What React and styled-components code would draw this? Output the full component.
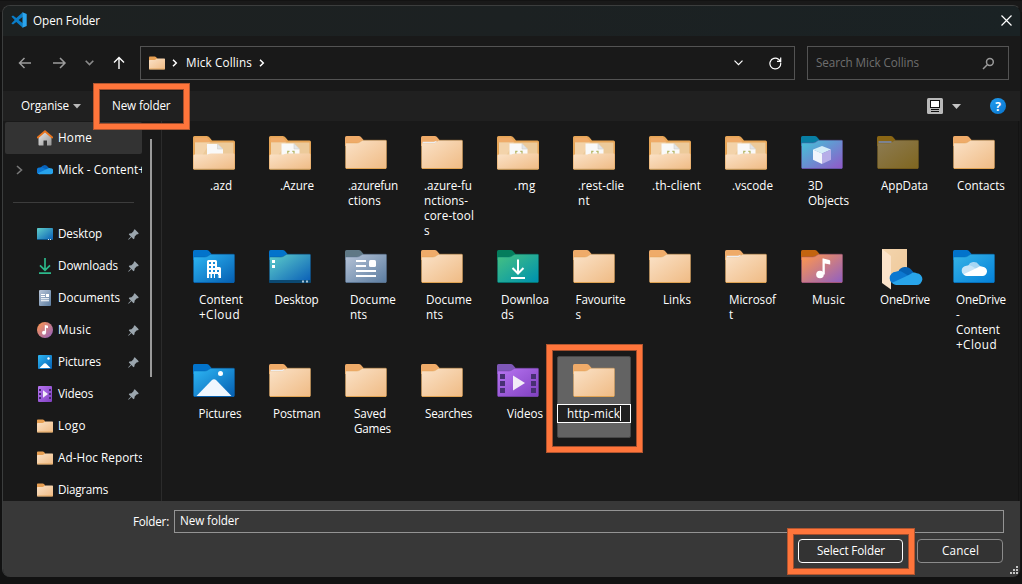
import React, { useLayoutEffect, useRef, useState } from "react";
import styled, { createGlobalStyle, css } from "styled-components";

const GlobalStyle = createGlobalStyle`
  * { box-sizing: border-box; }
  body {
    margin: 0;
    background: #121212;
    font-family: "Open Sans", "Noto Sans", sans-serif;
    font-size: 11.7px;
    line-height: 15px;
    color: #fff;
    overflow: hidden;
  }
  svg { display: block; flex: none; }
`;

/* ---------- text with a fixed advance width ---------- */

const Run = styled.span`
  display: block;
  width: max-content;
  margin-bottom: ${(p) => (p.$raised ? 2 : 0)}px;
  white-space: pre;
  color: ${(p) => p.$color || "#fff"};
`;

function Text({ children, w, color, raised }) {
  const ref = useRef(null);
  const [spacing, setSpacing] = useState(0);
  useLayoutEffect(() => {
    const natural = ref.current.getBoundingClientRect().width;
    if (w) setSpacing((w - natural) / children.length);
  }, []);
  return (
    <Run ref={ref} $color={color} $raised={raised} style={{ letterSpacing: `${spacing}px` }}>
      {children}
    </Run>
  );
}

/* ---------- window shell ---------- */

const Screen = styled.div`
  position: relative;
  width: 1022px;
  height: 584px;
  padding: 5px 1px 7px 2px;
  background: linear-gradient(#131313 0 1px, #191919 1px 12px, #121212 12px);
  overflow: hidden;
`;

const Dialog = styled.main`
  display: flex;
  flex-direction: column;
  width: 1019px;
  height: 572px;
  border: 1px solid #3b3d3d;
  border-right-color: #161616;
  border-bottom: 0;
  border-radius: 8px;
  background: #191919;
  overflow: hidden;
`;

const TitleBar = styled.header`
  display: flex;
  align-items: center;
  flex: none;
  height: 30px;
  padding: 0 8px 2px 8px;
  gap: 6px;
  background: linear-gradient(90deg, #1d2121, #1c2122 50%, #1a2224);
`;

const Spacer = styled.div`
  flex: 1;
`;

const NavBar = styled.nav`
  display: flex;
  flex: none;
  height: 55px;
  padding: 10px 10px 0 0;
`;

const NavButtons = styled.div`
  display: flex;
  align-items: center;
  width: 137px;
  height: 34px;
  padding-left: 15px;
`;

const Field = styled.div`
  display: flex;
  align-items: center;
  width: ${(p) => p.$width}px;
  height: 34px;
  margin-right: ${(p) => p.$after || 0}px;
  padding: 0 ${(p) => p.$padRight}px 0 8px;
  border: 1px solid #535353;
`;

const Gap = styled.i`
  flex: none;
  width: ${(p) => p.$w}px;
`;

const CommandBar = styled.div`
  display: flex;
  align-items: center;
  flex: none;
  height: 30px;
  padding: 0 14px 0 18px;
  background: #202020;
`;

const Content = styled.div`
  display: flex;
  flex: none;
  height: 380px;
  overflow: hidden;
`;

/* ---------- sidebar ---------- */

const Sidebar = styled.aside`
  display: flex;
  width: 159px;
  border-right: 1px solid #2b2b2b;
`;

const Tree = styled.div`
  width: 139px;
  padding: 1px 0 0 2px;
  overflow: hidden;
`;

const TreeRow = styled.div`
  display: flex;
  align-items: center;
  height: 32px;
  padding-right: 3px;
  overflow: hidden;
  ${(p) => p.$active && css`
    background: #333;
    border-radius: 2px;
  `}
`;

const Expander = styled.div`
  display: flex;
  justify-content: center;
  flex: none;
  width: 32px;
  padding-right: 3px;
`;

const TreeIcon = styled.div`
  flex: none;
  width: 21px;
`;

const TreeLabel = styled.div`
  flex: 1;
  white-space: nowrap;
`;

const Divider = styled.div`
  height: 32px;
  padding: 16px 8px 0 8px;
  &::after {
    content: "";
    display: block;
    height: 1px;
    background: #3c3c3c;
  }
`;

const ScrollTrack = styled.div`
  display: flex;
  justify-content: flex-end;
  width: 10px;
  padding-top: 18px;
`;

const ScrollThumb = styled.div`
  width: 2px;
  height: 238px;
  background: #9a9a9a;
`;

/* ---------- folder grid ---------- */

const FolderGrid = styled.section`
  display: grid;
  grid-template-columns: repeat(11, 76px);
  grid-auto-rows: 114px;
  width: 857px;
  padding: 7px 0 0 14px;
  border-right: 1px solid #131313;
`;

const Cell = styled.div`
  width: 74px;
  height: ${(p) => (p.$selected ? "82px" : "114px")};
  margin-left: 1px;
  padding-top: 8px;
  ${(p) => p.$selected && css`
    background: #636363;
    border: 1px solid #474747;
    padding-top: 7px;
    border-radius: 2px;
  `}
`;

const CellIcon = styled.div`
  display: flex;
  justify-content: center;
  height: 42px;
`;

const CellLabel = styled.div`
  padding-left: ${(p) => p.$left - 1}px;
`;

const NameEditor = styled.div`
  display: flex;
  align-items: center;
  height: 19px;
  margin: -2px -1px 0;
  padding-left: 9px;
  border: 1px solid #fff;
  background: #202020;
`;

const Caret = styled.i`
  width: 1px;
  height: 15px;
  background: #fff;
`;

/* ---------- footer ---------- */

const Footer = styled.footer`
  flex: 1;
  padding: 9px 16px 0 0;
  background: #383838;
`;

const FooterRow = styled.div`
  display: flex;
  align-items: center;
  height: 23px;
  padding-left: 130px;
`;

const FolderInput = styled.div`
  display: flex;
  width: 830px;
  height: 23px;
  padding: 2px 0 0 5px;
  border: 1px solid #949494;
`;

const InputLabel = styled.div`
  width: 41px;
`;

const Actions = styled.div`
  display: flex;
  justify-content: flex-end;
  gap: 14px;
  padding: 6px 1px 0 0;
`;

const Button = styled.div`
  display: flex;
  align-items: center;
  justify-content: center;
  width: ${(p) => p.$width}px;
  height: 24px;
  padding-left: 1px;
  border: 1px solid ${(p) => (p.$primary ? "#fff" : "#8b8b8b")};
  border-radius: 4px;
  background: #333;
`;

const Grip = styled.div`
  position: absolute;
  left: 1010px;
  top: 566px;
`;

const Highlight = styled.div`
  position: absolute;
  left: ${(p) => p.$x}px;
  top: ${(p) => p.$y}px;
  width: ${(p) => p.$w}px;
  height: ${(p) => p.$h}px;
  border: 6px solid #ff753b;
  outline: 1px solid #b2552f;
  outline-offset: -1px;
  box-shadow: inset 0 0 0 1px #a14d2c;
`;

const Hidden = styled.svg`
  position: absolute;
`;

/* ---------- drawings ---------- */

const gradients = {
  sand: ["#fae0c4", "#f0bd88"],
  blue: ["#2cb3f1", "#0763b5"],
  teal: ["#5bc9c9", "#0c62b8"],
  slate: ["#b3c1d5", "#6080a3"],
  green: ["#43bf83", "#0093ad"],
  music: ["#fd9650", "#9562bd"],
  cube: ["#45c1d8", "#8e5dc9"],
  olive: ["#8c7a50", "#806722"],
  drive: ["#34b2e6", "#0683da"],
  violet: ["#b573ef", "#8343c3"],
  house: ["#e4e4e4", "#9a9a9a"],
};

const tabColor = {
  sand: "#efab69", blue: "#0273cb", teal: "#0273cb", slate: "#5f7885", green: "#047d5c",
  music: "#c3640f", cube: "#087ea3", olive: "#8a6614", drive: "#0273cb", violet: "#7e57b7",
};

const edgeColor = {
  sand: "#dfa252", blue: "#075fab", teal: "#0a5794", slate: "#58718d", green: "#04736e",
  music: "#a2577a", cube: "#6654a4", olive: "#72581a", drive: "#0670bb", violet: "#7141a3",
};

function Gradients() {
  return (
    <Hidden width="0" height="0">
      <defs>
        {Object.entries(gradients).map(([id, [a, b]]) => (
          <linearGradient key={id} id={id} x1="0" y1="0" x2="1" y2="1">
            <stop offset="0.05" stopColor={a} />
            <stop offset="0.95" stopColor={b} />
          </linearGradient>
        ))}
      </defs>
    </Hidden>
  );
}

const Cloud = ({ dark, mid, light }) => (
  <>
    <path d="M8 6.5A7 6.5 0 0 1 20.5 5L23 8 14 14 3 12Z" fill={dark} />
    <path d="M5.7 6.6Q9 5 12.5 7.2L22 13 6 18.6A6 6 0 0 1 5.7 6.6Z" fill={mid} />
    <path d="M20 8.5Q22.5 6.5 25.5 8A5.5 5.5 0 0 1 25 19H6Q3.6 19 2.2 17L17 10Z" fill={light} />
  </>
);

const glyphs = {
  building: (
    <g fill="#fff">
      <path d="M14 28V11.500q0-1.500 1.500-1.500h7q1.500 0 1.500 1.500V17h2.500q1.500 0 1.500 1.500V28h-3v-4h-3v4Z" />
      <g fill="#168bd8">
        <path d="M16 12h2v2h-2zM20 12h2v2h-2zM16 16h2v2h-2zM20 16h2v2h-2zM16 20h2v2h-2zM20 20h2v2h-2zM24 20h2v2h-2zM16 24h1.500v4H16zM19 24h2v4h-2zM24 25h1.500v3H24z" />
      </g>
    </g>
  ),
  desktop: (
    <g>
      <path d="M0 30h42v2q0 1-1 1H1q-1 0-1-1z" fill="#0b4972" />
      <path d="M3 10h3v3H3zM3 15h3v3H3z" fill="#fff" />
      <path d="M33 30.500h2v2h-2zM37 30.500h2v2h-2z" fill="#a9c5d9" />
    </g>
  ),
  doc: (
    <g fill="#fff">
      <path d="M11 10h10v2H11zM11 15h10v2H11zM11 20h20v2H11zM11 25h20v2H11z" />
      <rect x="24" y="10" width="7" height="7" rx="1.500" />
    </g>
  ),
  download: (
    <g fill="none" stroke="#fff" strokeWidth="2">
      <path d="M21 9.500V23M15.500 18l5.500 5.500 5.500-5.500M14 28h14" />
    </g>
  ),
  music: (
    <g fill="#fff">
      <circle cx="19" cy="24.500" r="3.800" />
      <path d="M21.500 24.500V9q0-.8.800-.6l6 1.600q.9.300.9 1v3.500l-5.400-1v11Z" />
    </g>
  ),
  cube: (
    <g>
      <path d="M21 10l9 3.600-9 4-9-4z" fill="#d4edf8" />
      <path d="M12 13.600l9 4V28l-9-4.200z" fill="#f1f5fc" />
      <path d="M30 13.600l-9 4V28l9-4.200z" fill="#b7aee8" />
    </g>
  ),
  picture: (
    <g>
      <path d="M3.500 32L18.500 16.500q2.500-2.300 5 0L38.500 32z" fill="#eff7fe" />
      <circle cx="27.500" cy="9.500" r="2.500" fill="#fff" />
    </g>
  ),
  cloud: (
    <g transform="translate(8.800 10.300) scale(.82)">
      <Cloud dark="#a6d6f3" mid="#c7e5f8" light="#fff" />
    </g>
  ),
  video: (
    <g>
      <path d="M3 10h5v5H3zM3 17h5v5H3zM3 24h5v5H3zM34 10h5v5h-5zM34 17h5v5h-5zM34 24h5v5h-5z" fill="#473072" />
      <path d="M16 11.500v15l12-7.500z" fill="#f2edf7" />
    </g>
  ),
  sliver: <path d="M1.500 5.800h11.500l2.500-1v1.400l-2.500 1H1.500z" fill="#eeeef0" />,
  shade: <path d="M1.500 5h13v2h-13z" fill="#7c8290" />,
};

function Folder({ tone = "sand", glyph, width = 42, height = 33 }) {
  return (
    <svg width={width} height={height} viewBox="0 0 42 33" preserveAspectRatio="none">
      <path d="M0 1.500Q0 0 1.500 0h12.300q1.200 0 2.200 1l2.300 2.700V10H0z" fill={tabColor[tone]} />
      <path
        d="M.5 7.800q0-.8.8-.8H12q2 0 4-1.700Q17.300 4.200 18.500 4.200H40.700q.8 0 .8.800v26.500q0 1-1 1H1.500q-1 0-1-1z"
        fill={`url(#${tone})`}
        stroke={edgeColor[tone]}
        strokeOpacity=".45"
      />
      <path d="M1 32.500h40" stroke={edgeColor[tone]} />
      {glyph && glyphs[glyph]}
    </svg>
  );
}

function FilledFolder({ braces }) {
  return (
    <svg width="42" height="34" viewBox="0 0 42 34">
      <path d="M0 1.500Q0 0 1.500 0h12.300q1.700 0 3 1.700L19 4.500h21.500Q42 4.500 42 6v26.500q0 1-1 1H1q-1 0-1-1z" fill="#e6a557" />
      <path d="M1.500 1.500h12.500l4 5H1.500z" fill="#efab69" />
      <path d="M2 6.500h38.500V20H2z" fill="#ecca9a" />
      <path d="M2 6.500h15L9 20H2z" fill="#f3d3aa" />
      <path d={braces ? "M12.500 7.500H25l5.500 5.500v8h-18z" : "M14 8h10.500l5.500 5v8H14z"} fill="#f9f9f9" />
      <path d={braces ? "M25 7.500v5.500h5.500z" : "M24.500 8v5h5.500z"} fill="#e2e5e9" stroke="#cdc8bc" strokeWidth=".5" />
      {braces && <path d="M20.500 15.300h-1.700v3.500M23.300 15.300H25v3.500" fill="none" stroke="#b5b768" strokeWidth="1.300" />}
      <path d="M.5 19.500Q.5 18.500 2 18.500H13q1.500 0 2.500-.5t2.500-.5H40.500q1 0 1 1v14q0 1-1 1h-39q-1 0-1-1z" fill="url(#sand)" />
      <path d="M1 33.300h40" stroke="#b98d49" strokeWidth=".8" />
    </svg>
  );
}

const OneDriveFolder = () => (
  <svg width="42" height="42" viewBox="0 0 42 42" overflow="visible">
    <g transform="translate(0 -1)">
      <path d="M5 0h25v31H5z" fill="url(#sand)" />
      <path d="M5 0h25v31H14z" fill="#efcfa3" opacity=".7" />
      <path d="M5 0l9 7v33.500L5 34z" fill="#fbe3ca" />
    </g>
    <g transform="translate(12.800 14.800) scale(1.060)">
      <Cloud dark="#0562b4" mid="#0c78d0" light="#28a5ea" />
    </g>
  </svg>
);

const SmallFolder = () => (
  <svg width="16" height="14" viewBox="0 0 16 14">
    <path d="M0 1.200Q0 .4.800.4h5q.7 0 1.200.6l1 1.200V6H0z" fill="#e79f52" />
    <path d="M0 4.700q0-.6.600-.6h4.900q.8 0 1.500-.8.800-.9 1.500-.9h6.800q.7 0 .7.700v9.600q0 .7-.7.700H.7Q0 13.400 0 12.700z" fill="url(#sand)" />
    <path d="M.3 12.900h15.400" stroke="#dfa55c" strokeWidth=".8" />
  </svg>
);

const side = {
  home: (
    <svg width="16" height="16" viewBox="0 0 16 16">
      <path d="M1.500 7L8 1.500 14.500 7v7.800q0 .7-.7.700H10v-5H6.500v5H2.200q-.7 0-.7-.7z" fill="url(#house)" />
      <path d="M.7 7.500L8 1.300l7.300 6.200" fill="none" stroke="#e8741e" strokeWidth="1.800" strokeLinejoin="round" strokeLinecap="round" />
    </svg>
  ),
  cloud: (
    <svg width="16" height="16" viewBox="0 0 32 32">
      <g transform="translate(-.8 4) scale(1.090)">
        <Cloud dark="#0862ba" mid="#0d78d4" light="#27a3ec" />
      </g>
    </svg>
  ),
  desktop: (
    <svg width="16" height="16" viewBox="0 0 16 16">
      <rect y="2" width="16" height="12" rx=".8" fill="url(#teal)" />
      <path d="M0 13h16v.5q0 .5-.7.500H.7Q0 14 0 13.500z" fill="#0c5385" />
      <path d="M11 13h1v1h-1zM13 13h1v1h-1z" fill="#d7e5ef" />
    </svg>
  ),
  downloads: (
    <svg width="16" height="16" viewBox="0 0 16 16">
      <g fill="none" stroke="#2cb88a" strokeWidth="1.700">
        <path d="M8 0v12M3 7.300l5 5 5-5M2 15.200h12" />
      </g>
    </svg>
  ),
  documents: (
    <svg width="16" height="16" viewBox="0 0 16 16">
      <rect x="2" width="12" height="16" rx="1" fill="url(#slate)" />
      <path d="M4 4h4v1H4zM4 6h4v1H4zM4 8.200h8v1H4zM4 10.300h8v1H4zM9 4h3v3H9z" fill="#fff" />
    </svg>
  ),
  music: (
    <svg width="16" height="16" viewBox="0 0 16 16">
      <circle cx="8" cy="8" r="8" fill="url(#music)" />
      <circle cx="7" cy="10.800" r="2" fill="#fff" />
      <path d="M7.800 10.800V3l3.200.8v2.400l-1.900-.5v5.100z" fill="#fff" />
    </svg>
  ),
  pictures: (
    <svg width="16" height="16" viewBox="0 0 16 16">
      <rect x="1" y="1" width="14" height="14" rx="1" fill="url(#blue)" />
      <path d="M2.500 14L7 9.600q1-.9 2 0L13.500 14z" fill="#fff" />
      <circle cx="11.500" cy="4.500" r="1.200" fill="#fff" />
    </svg>
  ),
  videos: (
    <svg width="16" height="16" viewBox="0 0 16 16">
      <rect x="1" width="14" height="16" rx="1" fill="url(#violet)" />
      <path d="M2 3h2v2H2zM2 7h2v2H2zM2 11h2v2H2zM12 3h2v2h-2zM12 7h2v2h-2zM12 11h2v2h-2z" fill="#432b6e" />
      <path d="M6 4.300v7.400L11 8z" fill="#f3eef9" />
    </svg>
  ),
  folder: <SmallFolder />,
};

const Pin = () => (
  <svg width="11" height="11" viewBox="0 0 11 11">
    <path d="M6.800.3l3.900 3.900-.6 1-1.200.1L6.700 7.600l-.3 2-1 .6L3.500 8 .7 10.700l-.5-.5L2.900 7.500.8 5.400l.6-1 2.100-.2L5.700 2 5.800 1z" fill="#9ba6ae" />
  </svg>
);

const Line = ({ w, h, d, color = "#fff", sw = 1.2 }) => (
  <svg width={w} height={h} viewBox={`0 0 ${w} ${h}`}>
    <path d={d} fill="none" stroke={color} strokeWidth={sw} />
  </svg>
);

const VSCode = () => (
  <svg width="16" height="16" viewBox="0 0 16 16">
    <path d="M11.800.2L5.300 6 2 3.600.4 4.500 3.700 8 .4 11.500 2 12.400 5.300 10l6.500 5.800V11.300L7.600 8l4.200-3.300z" fill="#0a7dc8" />
    <path d="M11.500.2L15.700 2v12l-4.200 1.800z" fill="#2ba5ef" />
  </svg>
);

const ViewIcon = () => (
  <svg width="16" height="16" viewBox="0 0 16 16">
    <rect width="16" height="16" rx="1.500" fill="#b9b9b9" />
    <rect x="3.500" y="2.500" width="9" height="7" fill="#fff" stroke="#111" />
    <path d="M4 11.500h8M4 13.500h8" stroke="#111" />
  </svg>
);

const HelpBadge = styled.div`
  display: flex;
  align-items: center;
  justify-content: center;
  width: 16px;
  height: 16px;
  border-radius: 50%;
  background: linear-gradient(135deg, #229ef0, #0874ce);
  font-size: 12px;
  font-weight: 700;
`;

/* ---------- data ---------- */

const tree = [
  { icon: "home", lines: "Home", w: 34, active: true },
  { icon: "cloud", lines: "Mick - Content+", w: 87, expandable: true },
  { divider: true },
  { icon: "desktop", lines: "Desktop", w: 44, pin: true },
  { icon: "downloads", lines: "Downloads", w: 60, pin: true },
  { icon: "documents", lines: "Documents", w: 62, pin: true },
  { icon: "music", lines: "Music", w: 33, pin: true },
  { icon: "pictures", lines: "Pictures", w: 43, pin: true },
  { icon: "videos", lines: "Videos", w: 35, pin: true },
  { icon: "folder", lines: "Logo", w: 28 },
  { icon: "folder", lines: "Ad-Hoc Reports", w: 86 },
  { icon: "folder", lines: "Diagrams", w: 50 },
];

// left: label offset inside its cell; lines: [text, width]
const folders = [
  { kind: "filled", left: 34, lines: [[".azd", 22]] },
  { kind: "braces", left: 28, lines: [[".Azure", 34]] },
  { left: 20, lines: [[".azurefun", 50], ["ctions", 33]] },
  { glyph: "sliver", left: 20, lines: [[".azure-fu", 48], ["nctions-", 44], ["core-tool", 50], ["s", 5]] },
  { kind: "braces", left: 34, lines: [[".mg", 22]] },
  { kind: "braces", left: 22, lines: [[".rest-clie", 46], ["nt", 12]] },
  { kind: "braces", left: 20, lines: [[".th-client", 49]] },
  { kind: "braces", left: 24, lines: [[".vscode", 41]] },
  { tone: "cube", glyph: "cube", left: 24, lines: [["3D", 15], ["Objects", 41]] },
  { tone: "olive", glyph: "shade", left: 21, lines: [["AppData", 47]] },
  { left: 21, lines: [["Contacts", 48]] },

  { tone: "blue", glyph: "building", left: 23, lines: [["Content", 44], ["+Cloud", 41]] },
  { tone: "teal", glyph: "desktop", left: 22.500, lines: [["Desktop", 44]] },
  { tone: "slate", glyph: "doc", left: 22, lines: [["Docume", 46], ["nts", 17]] },
  { left: 22, lines: [["Docume", 46], ["nts", 17]] },
  { tone: "green", glyph: "download", left: 21, lines: [["Downloa", 48], ["ds", 13]] },
  { left: 19.500, lines: [["Favourite", 50], ["s", 5]] },
  { left: 31, lines: [["Links", 28]] },
  { glyph: "sliver", left: 21, lines: [["Microsof", 47], ["t", 4]] },
  { tone: "music", glyph: "music", left: 28, lines: [["Music", 33]] },
  { kind: "onedrive", left: 20, lines: [["OneDrive", 50]] },
  { tone: "drive", glyph: "cloud", left: 20, lines: [["OneDrive", 50], ["-", 5], ["Content", 44], ["+Cloud", 41]] },

  { tone: "blue", glyph: "picture", left: 22.500, lines: [["Pictures", 43]] },
  { glyph: "sliver", left: 21, lines: [["Postman", 47.500]] },
  { left: 26, lines: [["Saved", 32], ["Games", 37]] },
  { left: 21, lines: [["Searches", 47]] },
  { tone: "violet", glyph: "video", left: 27, lines: [["Videos", 36]] },
  { selected: true, lines: [["http-mick", 53]] },
];

function FolderItem({ item }) {
  return (
    <Cell $selected={item.selected}>
      <CellIcon>
        {item.kind === "filled" || item.kind === "braces" ? (
          <FilledFolder braces={item.kind === "braces"} />
        ) : item.kind === "onedrive" ? (
          <OneDriveFolder />
        ) : (
          <Folder tone={item.tone} glyph={item.glyph} />
        )}
      </CellIcon>
      {item.selected ? (
        <NameEditor>
          <Text w={item.lines[0][1]}>{item.lines[0][0]}</Text>
          <Caret />
        </NameEditor>
      ) : (
        <CellLabel $left={item.left}>
          {item.lines.map(([text, w]) => (
            <Text key={text} w={w}>{text}</Text>
          ))}
        </CellLabel>
      )}
    </Cell>
  );
}

export default function App() {
  return (
    <Screen>
      <GlobalStyle />
      <Gradients />
      <Dialog>
        <TitleBar>
          <VSCode />
          <Text w={67}>Open Folder</Text>
          <Spacer />
          <Line w={11} h={11} d="M.5.5l10 10M10.500.5l-10 10" />
        </TitleBar>

        <NavBar>
          <NavButtons>
            <Line w={14} h={12} d="M13 6H1.500M6.500 1L1.500 6l5 5" color="#9c9c9c" sw={1.5} />
            <Gap $w={21} />
            <Line w={14} h={12} d="M0 6h12M7 1l5 5-5 5" color="#9c9c9c" sw={1.5} />
            <Gap $w={18} />
            <Line w={9} h={6} d="M.7.7l3.800 3.800L8.300.7" color="#8a8a8a" sw={1.6} />
            <Gap $w={19} />
            <Line w={12} h={14} d="M6 13V1.500M1 6.500l5-5 5 5" sw={1.4} />
          </NavButtons>
          <Field $width={655} $after={12} $padRight={12}>
            <SmallFolder />
            <Gap $w={7} />
            <Line w={6} h={8} d="M1 .7L4.300 4 1 7.300" sw={1.5} />
            <Gap $w={8} />
            <Text w={66} raised>Mick Collins</Text>
            <Gap $w={7} />
            <Line w={6} h={8} d="M1 .7L4.300 4 1 7.300" sw={1.5} />
            <Spacer />
            <Line w={9} h={6} d="M.5.7l4 4 4-4" sw={1.2} />
            <Gap $w={26} />
            <Line w={13} h={13} d="M11.600 5.500A5.400 5.400 0 1 1 9.500 2.200L11.500 4M11.700.5V4.300H8" sw={1.2} />
          </Field>
          <Field $width={202} $padRight={13}>
            <Text w={103} color="#6f6f6f" raised>Search Mick Collins</Text>
            <Spacer />
            <Line w={13} h={13} d="M7.900 1.600a3.400 3.400 0 1 1 0 6.800 3.400 3.400 0 0 1 0-6.800zM5.500 7.500L1 12" color="#9a9a9a" sw={1.5} />
          </Field>
        </NavBar>

        <CommandBar>
          <Text w={48} raised>Organise</Text>
          <Gap $w={4} />
          <svg width="8" height="5" viewBox="0 0 8 5"><path d="M0 0h8L4 4.500z" fill="#b9b9b9" /></svg>
          <Gap $w={31} />
          <Text w={58.5} raised>New folder</Text>
          <Spacer />
          <ViewIcon />
          <Gap $w={9} />
          <svg width="9" height="5" viewBox="0 0 9 5"><path d="M0 0h9L4.500 5z" fill="#c4c4c4" /></svg>
          <Gap $w={29} />
          <HelpBadge>?</HelpBadge>
        </CommandBar>

        <Content>
          <Sidebar>
            <Tree>
              {tree.map((row, i) =>
                row.divider ? (
                  <Divider key={i} />
                ) : (
                  <TreeRow key={i} $active={row.active}>
                    <Expander>
                      {row.expandable && <Line w={7} h={10} d="M1 1l4.500 4L1 9" color="#777" sw={1.6} />}
                    </Expander>
                    <TreeIcon>{side[row.icon]}</TreeIcon>
                    <TreeLabel><Text w={row.w} raised>{row.lines}</Text></TreeLabel>
                    {row.pin && <Pin />}
                  </TreeRow>
                )
              )}
            </Tree>
            <ScrollTrack><ScrollThumb /></ScrollTrack>
          </Sidebar>
          <FolderGrid>
            {folders.map((item, i) => <FolderItem key={i} item={item} />)}
          </FolderGrid>
        </Content>

        <Footer>
          <FooterRow>
            <InputLabel><Text w={36}>Folder:</Text></InputLabel>
            <FolderInput><Text w={59}>New folder</Text></FolderInput>
          </FooterRow>
          <Actions>
            <Button $width={105} $primary><Text w={68} raised>Select Folder</Text></Button>
            <Button $width={86}><Text w={37} raised>Cancel</Text></Button>
          </Actions>
        </Footer>
      </Dialog>

      <Grip>
        <svg width="8" height="8" viewBox="0 0 8 8">
          <path d="M6 0h2v2H6zM3 3h2v2H3zM6 3h2v2H6zM0 6h2v2H0zM3 6h2v2H3zM6 6h2v2H6z" fill="#c4c4c4" />
        </svg>
      </Grip>
      <Highlight $x={93} $y={83} $w={97} $h={47} />
      <Highlight $x={546} $y={344} $w={97} $h={109} />
      <Highlight $x={787} $y={528} $w={128} $h={47} />
    </Screen>
  );
}
